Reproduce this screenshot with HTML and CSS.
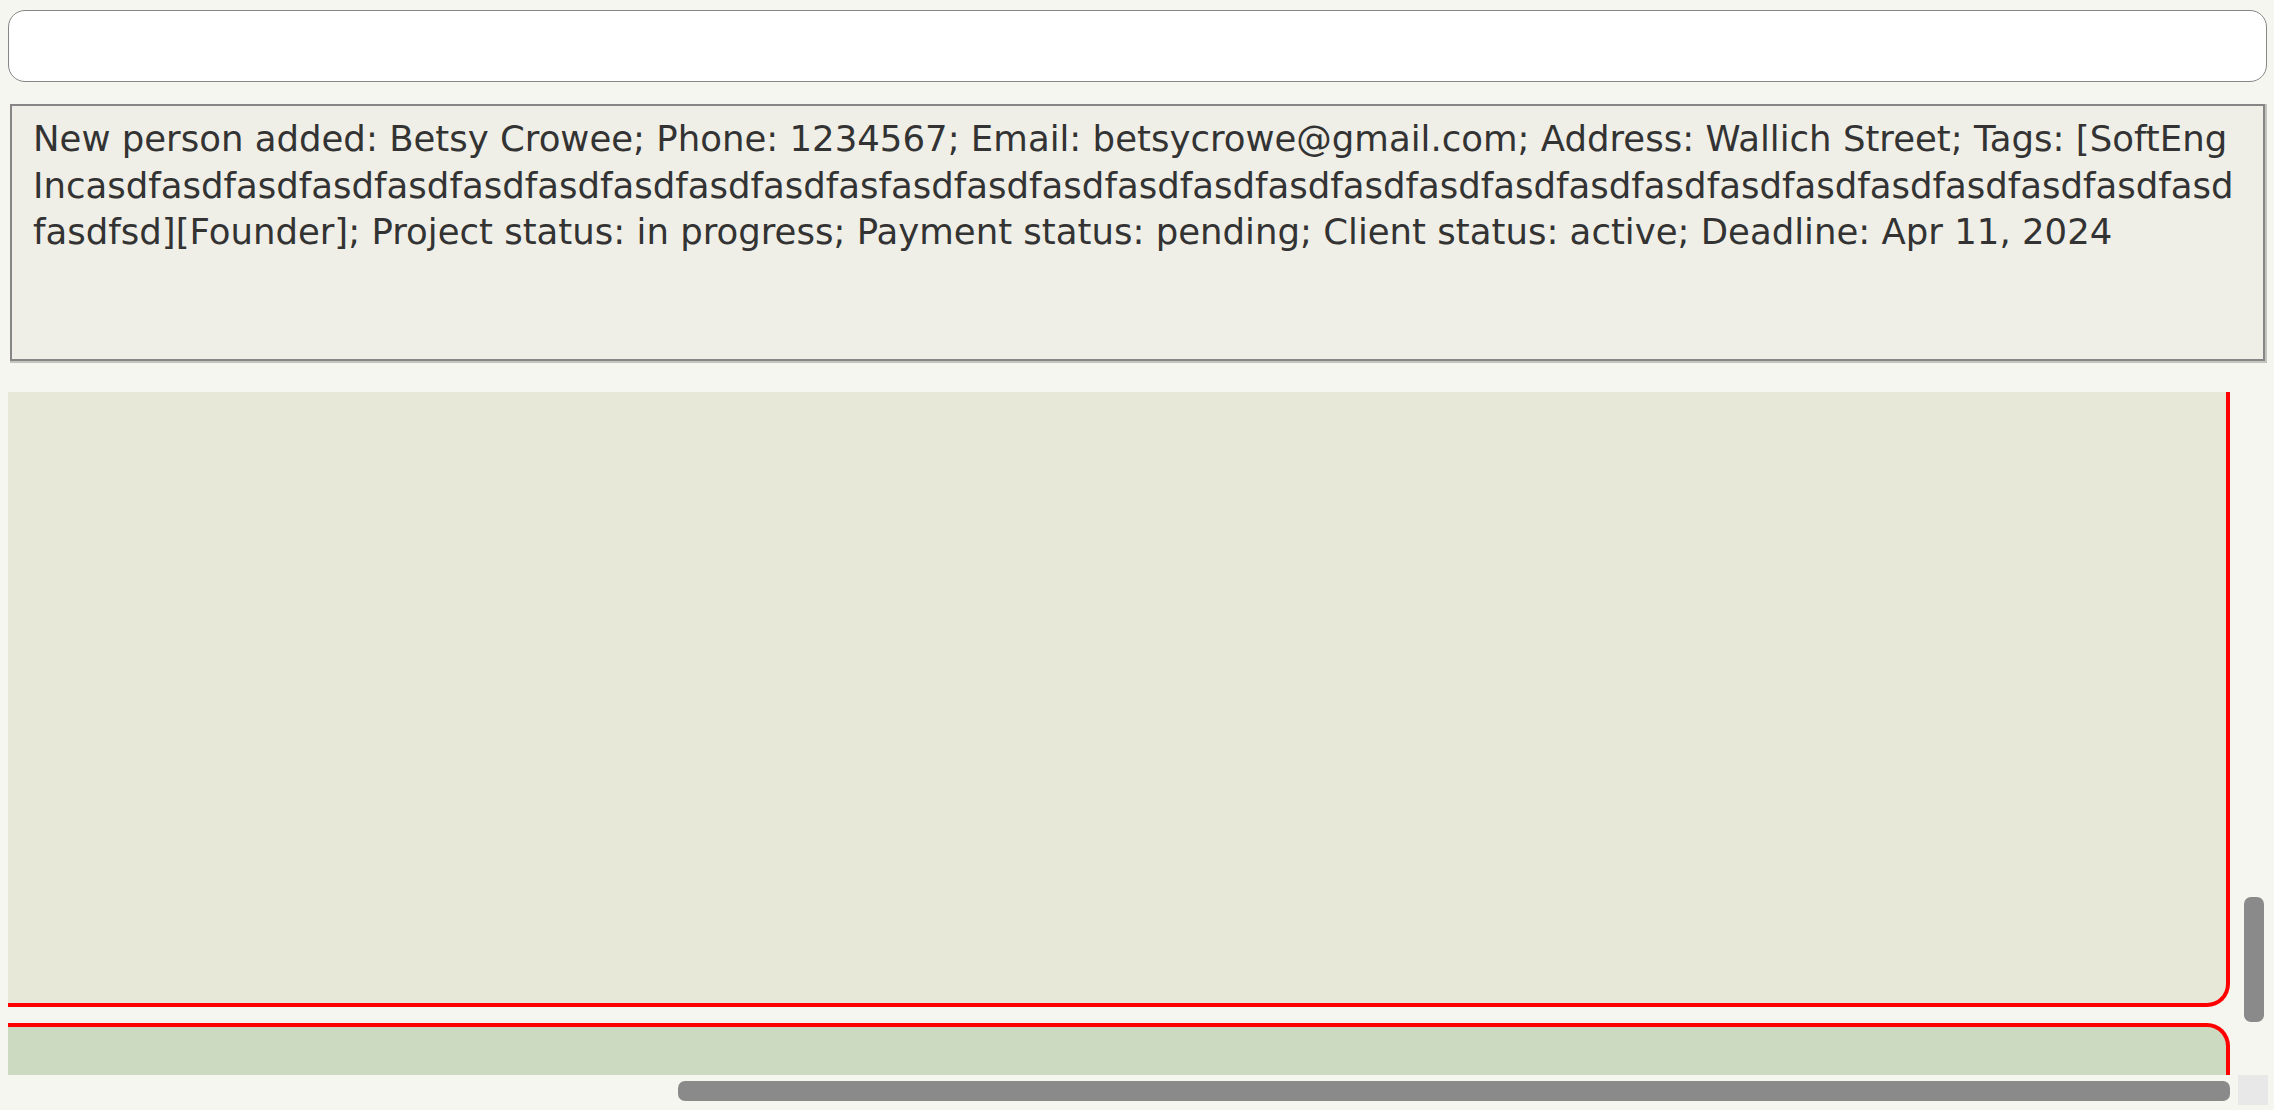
FILE: index.html
```html
<!DOCTYPE html>
<html>
<head>
<meta charset="utf-8">
<link rel="stylesheet" href="styles.css">
</head>
<body>
<div class="app">
  <div class="command-box"></div>
  <div class="result-box">
    <div class="result-text">New person added: Betsy Crowee; Phone: 1234567; Email: betsycrowe@gmail.com; Address: Wallich Street; Tags: [SoftEng<br>Incasdfasdfasdfasdfasdfasdfasdfasdfasdfasdfasfasdfasdfasdfasdfasdfasdfasdfasdfasdfasdfasdfasdfasdfasdfasdfasdfasdfasd<br>fasdfsd][Founder]; Project status: in progress; Payment status: pending; Client status: active; Deadline: Apr 11, 2024</div>
  </div>
  <div class="list-pane">
    <div class="viewport">
      <div class="card card-first"></div>
      <div class="card card-second"></div>
    </div>
    <div class="vscroll"><div class="vthumb"></div></div>
    <div class="hscroll"><div class="hthumb"></div></div>
    <div class="corner"></div>
  </div>
</div>
</body>
</html>
```
FILE: styles.css
```css
html, body {
  margin: 0;
  padding: 0;
  background: #f6f6f0;
  width: 2274px;
  height: 1110px;
  overflow: hidden;
}
.app {
  display: flex;
  flex-direction: column;
  padding: 10px 7px 0 8px;
  font-family: "DejaVu Sans", Verdana, sans-serif;
}
.command-box {
  height: 70px;
  background: #ffffff;
  border: 1.5px solid #868686;
  border-radius: 17px;
}
.result-box {
  box-sizing: border-box;
  margin: 22px 2px 0 2px;
  height: 257px;
  background: #efefe7;
  border: 2px solid #868686;
  box-shadow: 1px 1px 0 1px #c4c4bf;
  padding: 10px 20px 0 21px;
}
.result-text {
  font-size: 35.5px;
  line-height: 46.7px;
  color: #333333;
  white-space: nowrap;
}
.list-pane {
  margin-top: 31px;
  display: grid;
  grid-template-columns: 2230px 30px;
  grid-template-rows: 683px 30px;
}
.viewport {
  overflow: hidden;
  padding-right: 8px;
  display: flex;
  flex-direction: column;
  gap: 16px;
}
.card {
  flex: none;
}
.card-first {
  height: 611px;
  background: #e7e8d8;
  border-right: 4px solid #ff0000;
  border-bottom: 4px solid #ff0000;
  border-bottom-right-radius: 23px;
}
.card-second {
  height: 200px;
  background: #cbdac0;
  border-right: 4px solid #ff0000;
  border-top: 4px solid #ff0000;
  border-top-right-radius: 23px;
}
.vscroll {
  padding: 505px 4px 0 6px;
}
.vthumb {
  height: 125px;
  background: #8a8a8a;
  border-radius: 7px;
}
.hscroll {
  padding: 6px 8px 0 670px;
}
.hthumb {
  height: 20px;
  background: #8a8a8a;
  border-radius: 7px;
}
.corner {
  background: #e8e8e8;
}
```
